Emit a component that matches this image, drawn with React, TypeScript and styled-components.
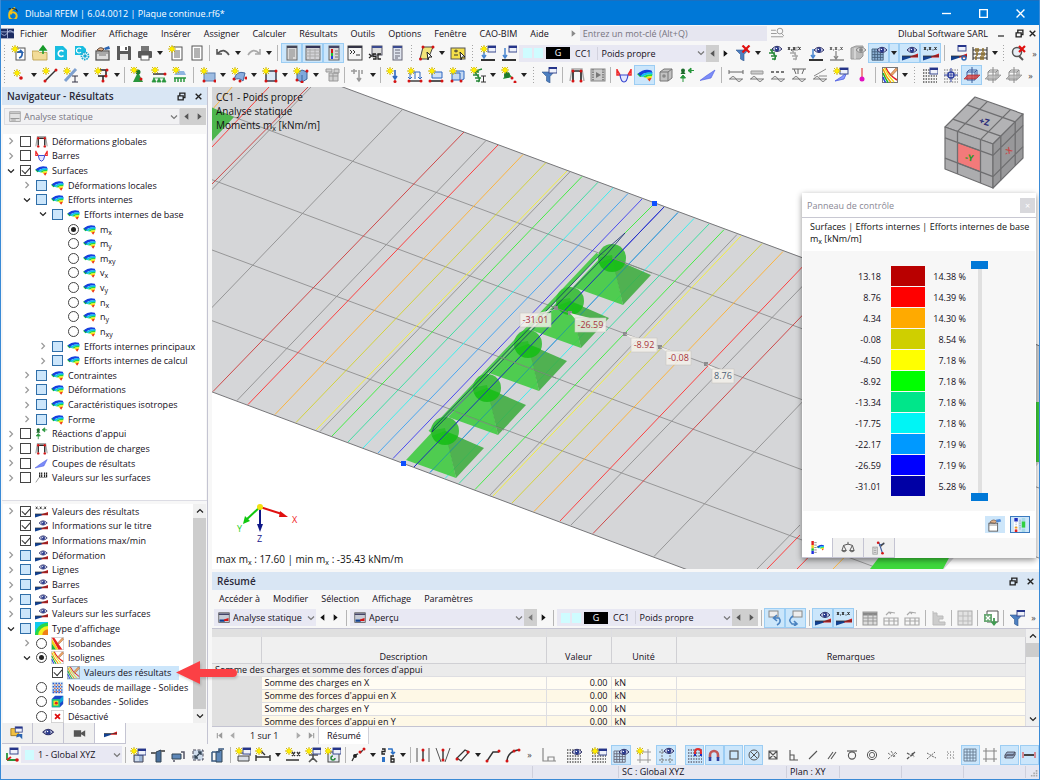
import React from "react";
import styled, { createGlobalStyle, css } from "styled-components";

const GlobalStyle = createGlobalStyle`
  * { box-sizing: border-box; }
  body { margin: 0; background: #fff; }
  body, button, input, select, table {
    font-family: "Open Sans", "Noto Sans", sans-serif;
    font-size: 9px;
    font-weight: 500;
    color: #140e20;
  }
  button { border: 0; padding: 0; background: none; }
  sub { font-size: 7px; line-height: 1; vertical-align: -2px; }
`;

/* ---------- icon drawings, all on a 16 x 16 grid ---------- */

const RED = "#d41414";
const GRAY = "#8a8a8a";
const BLUE = "#2b64b0";

const star = (x = 4, y = 4) => (
  <g>
    <path d={`M${x - 4} ${y}h8M${x} ${y - 4}v8M${x - 3} ${y - 3}l6 6M${x + 3} ${y - 3}l-6 6`} stroke="#c4aa00" strokeWidth=".9" />
    <circle cx={x} cy={y} r="2.2" fill="#fff000" stroke="#f0d800" strokeWidth=".8" />
  </g>
);
const dot = (x: number, y: number, c = RED, r = 1.5) => <circle cx={x} cy={y} r={r} fill={c} />;
const eye = (x = 11, y = 5) => (
  <g>
    <path d={`M${x - 5} ${y}q5 -5.500 10 0q-5 5 -10 0z`} fill="#d4d8ee" stroke="#2b2e66" strokeWidth="1" />
    <circle cx={x} cy={y} r="2.3" fill="#2a3a8c" />
    <circle cx={x - 0.6} cy={y - 0.6} r=".7" fill="#fff" />
  </g>
);
const page = (x = 3, y = 1, w = 10, h = 14) => (
  <rect x={x} y={y} width={w} height={h} fill="#fff" stroke="#555" strokeWidth="1" />
);
const cross = (x: number, y: number, r = 3) => (
  <path d={`M${x - r} ${y - r}l${2 * r} ${2 * r}M${x + r} ${y - r}l${-2 * r} ${2 * r}`} stroke="#e01010" strokeWidth="2.2" />
);
const wedge = (
  <g>
    <path d="M0 11H9V12.500L0 15.500z" fill="#12408f" />
    <path d="M8 11.500L16 8.500V12.500H8z" fill="#d21a1a" />
    <path d="M0 11L16 11" stroke="#333" strokeWidth=".8" />
  </g>
);
const xxx = (c = "#222") => (
  <path d="M1 2l2 3M3 2l-2 3M6 2l2 3M8 2l-2 3M11.500 2l2 3M13.500 2l-2 3M4.500 4.500v1M10 4.500v1" stroke={c} strokeWidth="1" fill="none" />
);
const windowBox = (x: number, y: number) => (
  <g>
    <rect x={x} y={y} width="8" height="6" fill="#eef1fa" stroke="#3b4a8f" />
    <path d={`M${x} ${y + 1}h8`} stroke="#26358a" strokeWidth="2" />
  </g>
);
const funnel = <path d="M1 5h12L9 9.500V16L5.500 14V9.500z" fill="#4d7fc0" stroke="#32598f" strokeWidth=".6" />;
const surface = (
  <g>
    <path d="M0 7L4 5L6 9L3 10z" fill="#10b83c" />
    <path d="M1 6.500Q7 1 14.500 3.500L15.500 6Q7 4.500 3.500 9z" fill="#1740e0" />
    <path d="M3.500 9Q8 4.500 15.300 5.500L15.500 7.500Q9 6.500 6 10z" fill="#10bff0" />
    <path d="M6 10Q9 6.800 15.500 7.200L15 9Q10.500 8.800 8.500 10.500z" fill="#22d840" />
    <path d="M8.500 10.500Q11 8.800 15.200 9L14.500 11Q12 10.500 10.500 12z" fill="#f4ea10" />
    <path d="M10.500 12Q12.500 10.500 14.600 11L12.500 14.500z" fill="#f03a10" />
  </g>
);
const coil = (c: string) => (
  <path d="M12 2Q3 4 7 8Q11 12 8 15M4 5h5M3 8h6M5 11h6M6 14h4" fill="none" stroke={c} strokeWidth="1.500" />
);
const grid = (x: number, y: number, n: number, s: number, c: string) => (
  <path
    d={Array.from({ length: n + 1 }, (_, i) => `M${x + i * s} ${y}v${n * s}M${x} ${y + i * s}h${n * s}`).join("")}
    stroke={c}
    strokeWidth=".9"
    fill="none"
  />
);
const dotGrid = (c = "#555") => (
  <path d="M1 3h14M1 6h14M1 9h14M1 12h14M1 15h14" stroke={c} strokeWidth="1.400" strokeDasharray="1.400 1.200" />
);
const supports = (c: string) => <path d="M2 11h12M3 11l-2 4h4zM8 11l-2 4h4zM13 11l-2 4h4z" fill={c} stroke={c} strokeWidth=".8" />;
const pencil = <path d="M14 1L9 6.500L8.500 8.500L10.500 8L15.500 2.800z" fill="#f0a868" stroke="#a05a30" strokeWidth=".6" />;
const isoPage = (w = 1.3, bg = "#fff", edge = "#d0d0d0") => (
  <g fill="none">
    <rect x=".5" y=".5" width="15" height="15" fill={bg} stroke={edge} />
    <path d="M1 2Q4 10 9 15.500" stroke="#f0a000" strokeWidth={w} />
    <path d="M4 1Q7 8 15 13" stroke="#e02020" strokeWidth={w} />
    <path d="M1 6Q3 11 6 15.500" stroke="#18b028" strokeWidth={w} />
    <path d="M1 10Q2 13 3.500 15.500" stroke="#2040e0" strokeWidth={w} />
    <path d="M2.500 1Q6 9 12 15" stroke="#f2e020" strokeWidth={w} />
    {pencil}
  </g>
);
const wave = (c: string) => <path d="M2 12Q5 7 8 12T14 12M1 12h14" fill="none" stroke={c} strokeWidth="1" />;
const plane = (c: string) => (
  <g fill="none">
    <path d="M5 3h8v8M3 5h8v8H3zM3 5l2-2M11 5l2-2M8 0v16" stroke={c} strokeWidth="1" />
    <path d="M0 12L4 8H16L12 12z" fill={c === GRAY ? "#b5b5b5" : "#d84040"} stroke={c === GRAY ? "#888" : "#b01818"} strokeWidth=".6" fillOpacity=".8" />
  </g>
);
const frame = (c: string) => <path d="M2 3H14M4 3V14M12 3V14M2 1v3M14 1v3" stroke={c} strokeWidth="2" fill="none" />;

const ICONS: Record<string, React.ReactNode> = {
  newModel: <>{page(5, 3, 9, 12)}<path d="M6 7h5l-2-2M11 7q1 5-3 6" stroke={BLUE} fill="none" strokeWidth="1.800" />{star()}</>,
  open: <><path d="M0 6h6l1.500 1.500H15V15H1z" fill="#f2dc98" stroke="#b89a45" strokeWidth=".8" /><path d="M11 9V4M8 5l3-4l3 4z" fill="#169a2a" stroke="#169a2a" strokeWidth="1.500" /></>,
  brand: <><path d="M2 1h8l4 4v10H2z" fill="#19bde0" /><path d="M10.500 6.500a3 3 0 1 0 0 4" fill="none" stroke="#fff" strokeWidth="1.600" /></>,
  brandGear: <><path d="M1 1h8l3 3v6H1z" fill="#19bde0" /><path d="M7 4a2.500 2.500 0 1 0 0 3" fill="none" stroke="#fff" strokeWidth="1.200" /><circle cx="11" cy="11" r="3.500" fill="#fff" stroke="#19a8d0" strokeWidth="1.800" strokeDasharray="1.600 .8" /><circle cx="11" cy="11" r="1.800" fill="#19a8d0" /></>,
  box: <><rect x="1" y="6" width="13" height="9" fill="#dcdcdc" stroke="#555" strokeWidth="1.300" /><path d="M2 8h11M4 10h7" stroke="#777" /><path d="M2 5Q5 1 9 4l-2 2z" fill="#e0b088" stroke="#5a4538" strokeWidth="1" /><path d="M9 3l5-2l1 3l-5 1z" fill={BLUE} /></>,
  save: <><path d="M1 1h13l1 1v13H1z" fill="#5a5a5a" /><rect x="4" y="1" width="8" height="5" fill="#fff" /><rect x="9" y="2" width="2" height="3" fill="#5a5a5a" /><rect x="4" y="9" width="8" height="6" fill="#e8e8e8" /></>,
  print: <><rect x="1" y="6" width="14" height="7" rx="1" fill="#5a5a5a" /><rect x="4" y="1" width="8" height="5" fill="#777" /><rect x="4" y="10" width="8" height="5" fill="#fff" stroke="#5a5a5a" /></>,
  docStar: <>{page(4, 2, 10, 13)}<path d="M6 6h6M6 8h6M6 10h6M6 12h6" stroke="#666" />{star()}</>,
  doc: <>{page()}<path d="M5 4h6M5 6h6M5 8h6M5 10h6M5 12h6" stroke="#666" /></>,
  undo: <path d="M2 4v5h5M2.500 8.500Q9 2 14 10" fill="none" stroke="#555" strokeWidth="1.600" />,
  redo: <path d="M14 4v5h-5M13.500 8.500Q7 2 2 10" fill="none" stroke="#aaa" strokeWidth="1.600" />,
  navPanel: <><rect x="3" y="1" width="10" height="14" fill="#d8d8d8" stroke="#666" /><path d="M3 2h10" stroke="#445" strokeWidth="2" /><path d="M5 5h6M5 7h6M5 9h6M5 11h6M5 13h4" stroke="#888" /></>,
  tablePanel: <><rect x="1" y="1" width="14" height="14" fill="#d4d4d8" stroke="#666" /><path d="M1 2h14" stroke="#335" strokeWidth="2" /><path d="M1 5h14M1 8h14M1 11h14M5 4v11M10 4v11" stroke="#aaa" /></>,
  ctrlPanel: <><rect x="3" y="1" width="10" height="14" fill="#d8d8d8" stroke="#666" /><path d="M3 2h10" stroke="#446" strokeWidth="2" /><path d="M6 4v4" stroke={RED} strokeWidth="2" /><path d="M6 8v3" stroke="#20c030" strokeWidth="2" /><path d="M6 11v3" stroke="#2040e0" strokeWidth="2" /><path d="M9 6h3M9 9h3M9 12h3" stroke="#777" /></>,
  console: <><rect x="1" y="1" width="14" height="14" fill="#f4f4f4" stroke="#444" /><path d="M1 2h14" stroke="#334" strokeWidth="2" /><path d="M3 5l2 2l-2 2M6 5l2 2l-2 2M9 10h4" fill="none" stroke="#333" /></>,
  script: <><rect x="4" y="1" width="10" height="9" fill="#ddd" stroke="#556" /><path d="M4 2h10" stroke="#3b4a8f" strokeWidth="2" /><path d="M1 9l2.500 2l-2.500 2M8 9H5v2.500h3V14H5M13 9h-3v5h3" fill="none" stroke="#222" strokeWidth="1.300" /></>,
  listDoc: <><rect x="4" y="1" width="9" height="14" fill="#dfe4ee" stroke="#667" /><path d="M4 2h9" stroke="#3b4a8f" strokeWidth="2" /><path d="M6 5h5M6 8h5M6 11h5M6 13h3" stroke="#667" /></>,
  lasso: <><path d="M4 2h10L9 14H1z" fill="#f3e67a" stroke="#444" />{dot(4, 2)}{dot(14, 2)}{dot(1.500, 14)}<path d="M8 7l5 5h-3l-1 3z" fill="#fff" stroke="#222" /></>,
  zone: <><rect x="1" y="3" width="14" height="11" fill="#f5e04a" stroke="#555" /><path d="M4 6h4M6 4.500v3M4 10h4" stroke="#333" /><path d="M10 7l5 5h-3l-1 3z" fill="#fff" stroke="#222" /></>,
  loadNew: <><path d="M1 15h14" stroke="#333" strokeWidth="2" /><path d="M4 5v8M2 10l2 3l2-3" stroke="#4a86d0" fill="none" strokeWidth="1.500" />{windowBox(8, 1)}{star(4, 4)}</>,
  load: <><path d="M1 15h14" stroke="#333" strokeWidth="2" /><path d="M4 3v10M2 10l2 3l2-3" stroke="#4a86d0" fill="none" strokeWidth="1.500" />{windowBox(8, 1)}</>,
  filterOff: <>{funnel}{cross(11, 4, 3.500)}</>,
  coilEye: <>{coil("#28883a")}{eye(11, 4)}</>,
  coilX: <>{coil("#aaa")}{xxx("#333")}</>,
  loadEye: <><path d="M1 15h14" stroke="#333" strokeWidth="2" /><path d="M5 4v9M3 10l2 3l2-3" stroke="#4a86d0" fill="none" strokeWidth="1.500" />{eye(11, 5)}</>,
  loadX: <><path d="M1 15h14M7 6v8M5 11l2 3l2-3" stroke="#888" fill="none" strokeWidth="1.300" />{xxx("#555")}</>,
  solidEye: <><path d="M1 3l5-2h7v10l-3 3H1z" fill="#bbb" stroke="#999" /><path d="M5 3v11" stroke="#eee" /><path d="M6 5q5-5.500 10 0q-5 5-10 0z" fill="#ddd" stroke="#888" /><circle cx="11" cy="5" r="2" fill="#888" /></>,
  meshEye: <><rect x="1" y="4" width="11" height="11" fill="#8fb4d8" />{grid(1, 4, 4, 2.800, "#44607c")}{eye(11, 5)}</>,
  resultEye: <>{wedge}{eye(10, 5)}</>,
  resultX: <>{wedge}{xxx()}</>,
  resultWin: <>{wedge}{windowBox(7, 0)}<circle cx="13" cy="13" r="2" fill="none" stroke={BLUE} strokeWidth="1.500" /></>,
  abacus: <><path d="M1 2v13M15 2v13M1 5h14M1 9h14M1 13h14" stroke="#333" strokeWidth="1.100" /><path d="M4 3v4M6 3v4M11 3v4M5 7v4M10 7v4M12 7v4M4 11v4M9 11v4M11 11v4" stroke="#8a6a20" strokeWidth="1.400" /></>,
  findOff: <><circle cx="7" cy="7" r="4.500" fill="#e8eef5" stroke="#555" strokeWidth="1.500" /><path d="M9 11l4 4" stroke="#555" strokeWidth="2" />{cross(12, 4, 3)}</>,
  node: <>{star(6, 6)}{dot(10, 11, RED, 1.800)}</>,
  line: <><path d="M3 14L14 3" stroke="#333" strokeWidth="1.500" />{dot(3, 14)}{dot(14, 3)}{star()}</>,
  member: <><path d="M2 14L13 2" stroke="#7da0d0" strokeWidth="3" /><path d="M9 9h6M12 9v6M9 15h6" stroke="#334" />{star()}</>,
  poly: <><path d="M4 9h8V3H6M9 9v5" fill="none" stroke="#222" strokeWidth="1.500" />{dot(9, 14)}{dot(13, 3)}{dot(12, 9)}{star()}</>,
  nodeSup: <><path d="M8 5L3 15h10z" fill="#28963c" />{dot(8, 5, "#1d7a2c", 2.500)}{dot(11, 12)}{star(4, 3)}</>,
  lineSup: <><path d="M2 7h12" stroke="#333" strokeWidth="1.500" />{dot(14, 7)}{supports("#28963c")}{star(4, 3)}</>,
  surfSup: <><path d="M2 8h12l-2-4H6z" fill="#8fb4e0" /><path d="M2 11h12M3 11v4M6 11v4M9 11v4M12 11v4" stroke="#28963c" strokeWidth="1.500" />{star(4, 3)}</>,
  surf: <><rect x="4" y="6" width="11" height="8" fill="#9dbce2" stroke="#5b7fae" />{dot(4, 14)}{dot(15, 14)}{star()}</>,
  surfCurved: <><path d="M3 13Q5 3 14 6L12 14Q8 10 3 13z" fill="#8aaee0" stroke="#44699f" />{dot(3, 12)}{dot(9, 14)}{dot(15, 11)}{star()}</>,
  opening: <><rect x="4" y="4" width="10" height="10" fill="#dbe8f7" stroke="#334" strokeWidth="1.400" />{dot(4, 14)}{dot(14, 14)}{dot(14, 4)}{star()}</>,
  solid: <><path d="M4 6l5-3l5 2v7l-5 3l-5-2z" fill="#7fa8dc" stroke="#3f669c" /><path d="M9 8v7" stroke="#3f669c" />{dot(4, 13)}{dot(9, 15)}{dot(14, 4)}{star()}</>,
  solidGray: <path d="M2 2h6v3H2zM5 6h9v8H5zM5 9h9M9 6v8M10 2h5v4h-5z" fill="#d0d0d0" stroke="#999" />,
  loadGray: <path d="M4 2v5M1 4h6M9 3v11M7 11l2 3l2-3M12 3v4" fill="none" stroke="#999" strokeWidth="1.500" />,
  nodalLoad: <><path d="M9 3v9M7 9l2 3l2-3" fill="none" stroke="#2c66c0" strokeWidth="1.600" />{dot(9, 14.500)}{star()}</>,
  lineLoad: <><path d="M3 12V5h10v7M8 5v7M1 10l2 2l2-2M11 10l2 2l2-2" fill="none" stroke="#2c66c0" /><path d="M2 14h12" stroke="#333" strokeWidth="1.400" />{dot(2, 14)}{dot(14, 14)}{star()}</>,
  memberLoad: <><path d="M4 5h10v6H4z" fill="#cfe0f6" stroke="#2c66c0" /><path d="M2 14h12" stroke="#555" strokeWidth="2" />{dot(2, 14)}{dot(14, 14)}{star()}</>,
  surfLoad: <><path d="M3 13V6h8v7zM7 4h8v8l-4 2" fill="#c3d8f2" stroke="#2c66c0" />{dot(3, 14)}{dot(12, 14)}{star()}</>,
  impLoad: <>{coil("#28883a")}<path d="M11 9h5M13.500 9v6M11 15h5" stroke="#333" />{star(4, 3)}</>,
  nodeImp: <><path d="M6 4l5 6l-9 2z" fill="#28963c" />{dot(6, 8, "#1d7a2c", 3)}{dot(11, 11)}{dot(14, 15)}{star(4, 3)}</>,
  filterWin: <>{funnel}{windowBox(8, 0)}</>,
  frameGlobal: <><path d="M1 14L3 2H13L15 14" fill="none" stroke="#a8a8a8" strokeWidth="1.400" /><path d="M4 13V5Q4 4 6 4H10Q12 4 12 5V13" fill="none" stroke="#2c2c2c" strokeWidth="1.700" />{dot(4, 14)}{dot(12, 14)}{dot(4, 4)}{dot(12, 4)}</>,
  film: <><rect x="1" y="2" width="14" height="12" fill="#ccc" stroke="#888" /><path d="M3 2v12M13 2v12" stroke="#888" strokeWidth="2" strokeDasharray="1.500 1" /><path d="M6 5l5 3l-5 3z" fill="#777" /></>,
  bars: <><path d="M1 2V8H4M4 8L1 3M15 2V8H12M12 8L15 3" stroke="#f02828" fill="none" strokeWidth="1.500" /><path d="M4 8h8Q11 15 8 15T4 8z" fill="#e4e8ff" stroke="#3a48d0" strokeWidth="1.200" /></>,
  surface,
  cubeGray: <><path d="M2 5l4-3h8v9l-4 3H2zM2 5h8v9M10 5l4-3" fill="#c2c2c2" stroke="#777" /><circle cx="6" cy="9" r="1.800" fill="#888" /></>,
  reactions: <><path d="M4 15V10M1.500 11L4 8l2.500 3zM15 3.500H9M12 1L9 3.500l3 2.500z" fill="#28963c" stroke="#28963c" />{dot(4, 3.500, "#1d6a2c", 2)}<path d="M1.500 7h5L4 3z" fill="#1d6a2c" /></>,
  section: <path d="M0 13.500L6 9L15 3L11 11z" fill="#7b8cf8" stroke="#4a5ae0" strokeWidth=".6" />,
  dimA: <><path d="M1 5h14M1 3v4M15 3v4" stroke="#666" />{wave("#777")}</>,
  dimB: <><path d="M2 4h12v3H2z" fill="#ccc" stroke="#999" />{wave("#777")}</>,
  dimC: <><path d="M1 5h14" stroke="#777" strokeWidth="2" strokeDasharray="3 2" />{wave("#777")}</>,
  dimD: <><path d="M1 2h14M3 2l2 5M13 2l-2 5M7 2v5" stroke="#666" />{wave("#777")}</>,
  dimE: <><path d="M2 9L14 2M7 9h8" stroke="#888" />{wave("#777")}</>,
  sectionNew: <><path d="M2 14Q9 10 14 5l-3 7z" fill="#8b9cff" stroke="#4a5ae0" strokeWidth=".8" />{windowBox(7, 1)}{star()}</>,
  pin: <><path d="M8 1v10" stroke="#e02020" />{dot(8, 12, "#e010c0", 2.500)}</>,
  iso: isoPage(1.500, "#fff", "#777"),
  isoThin: isoPage(),
  isoWide: <><rect x=".5" y=".5" width="15" height="15" fill="#fff" stroke="#d0d0d0" /><path d="M1 1h3L14 15.500H9z" fill="#e82020" /><path d="M1 2L9 15.500H6L1 8z" fill="#f2cf10" /><path d="M1 8l5 7.500H1z" fill="#18b840" />{pencil}</>,
  isoSel: isoPage(1.200, "#cfe4ee", "#9ab"),
  gridWin: <>{dotGrid()}{windowBox(8, 1)}</>,
  gridDots: <>{dotGrid("#999")}<circle cx="8" cy="8" r="3" fill="#fff" stroke="#3040a0" strokeWidth="1.500" /><path d="M8 1v14M1 8h14" stroke="#3040a0" /></>,
  planeA: plane("#3a5a9a"),
  planeB: plane(GRAY),
  valTag: <><path d="M5 3h4M11 3h4M5 6h4M11 6h4" stroke="#222" strokeWidth="2.500" strokeDasharray="1.500 1" /><path d="M1 14L5 8h10" fill="none" stroke="#888" /></>,
  colorMap: <><rect width="16" height="16" fill="#10c8f0" /><path d="M0 16A16 15 0 0 1 16 1V16z" fill="#28d848" /><path d="M4 16A12 11 0 0 1 16 5V16z" fill="#f2ee20" /><path d="M9 16A7 7 0 0 1 16 9V16z" fill="#f08018" /></>,
  meshPts: <><rect x="1" y="1" width="14" height="14" fill="#cfe4ee" /><path d="M2 3h12M2 7h12M2 11h12M2 14h12" stroke="#2a58d0" strokeWidth="2" strokeDasharray="2 1.500" /><path d="M4 5h9M4 9h9M4 13h9" stroke="#d05030" strokeWidth="1.500" strokeDasharray="1.500 2" /></>,
  cubeColor: <><path d="M1 5l4-4h10v10l-4 4H1z" fill="#1e48c8" /><path d="M1 5h10v10H1z" fill="#18c088" /><path d="M3 7h6v6H3z" fill="#f0e020" /><circle cx="6.500" cy="10" r="1.800" fill="#e02020" /><path d="M11 5l4-4v6l-4 3z" fill="#10a8d8" /></>,
  off: <><rect x=".5" y=".5" width="15" height="15" fill="#fff" stroke="#ccc" />{cross(8, 8, 3)}</>,
  static: <><rect x="1" y="1" width="14" height="13" fill="#c6cbd6" stroke="#555" /><path d="M1 3h14" stroke="#446" strokeWidth="2" /><path d="M2 10h7v3H2z" fill="#12408f" /><path d="M8 10l6-2v4H8z" fill={RED} /></>,
  staticGray: <><rect x="1" y="1" width="14" height="13" fill="#e2e2e2" stroke="#999" /><path d="M1 3h14M2 10h12M3 12h6" stroke="#999" strokeWidth="1.500" /></>,
  dataTab: <><path d="M1 3h9v8H1z" fill="#f2c040" stroke="#a07818" />{windowBox(6, 1)}<path d="M8 9h6v6l-3-3l-4 1z" fill={BLUE} /></>,
  eye: <g transform="translate(-5 1) scale(1.200)">{eye(11, 5)}</g>,
  camera: <path d="M1 4h9v8H1zM10 7l5-3v8l-5-3z" fill="#555" />,
  wedge: <g transform="translate(0 -3)">{wedge}</g>,
  hand: <><rect x="1" y="6" width="10" height="9" fill="#fff" stroke="#555" /><path d="M1 8h10" stroke="#888" /><path d="M2 5Q6 0 10 4l-2 2z" fill="#e0b088" stroke="#6a5040" strokeWidth=".8" /><path d="M9 2l5-1l1 3l-5 1z" fill="#4a88d8" /></>,
  scales2: <><rect x="1" y="0" width="5" height="16" fill="#fff" /><path d="M3.500 0v4" stroke="#2030c0" strokeWidth="4" /><path d="M3.500 13v3" stroke="#e02020" strokeWidth="3" /><path d="M3.500 10v2" stroke="#f0a020" strokeWidth="3" /><path d="M3.500 5v5" stroke="#999" strokeDasharray="1 1" /><path d="M12 0v4" stroke="#a8d8e8" strokeWidth="4" /><path d="M12 4v7" stroke="#30d040" strokeWidth="4" /><path d="M12 12v4" stroke="#a8d8e8" strokeWidth="4" /><path d="M8 2v12" stroke="#777" strokeDasharray="1 1" /></>,
  legend: <><path d="M2 0v5" stroke="#e02020" strokeWidth="3" /><path d="M2 5v4" stroke="#f0d020" strokeWidth="3" /><path d="M2 9v3" stroke="#20c030" strokeWidth="3" /><path d="M2 12v4" stroke="#2030e0" strokeWidth="3" /><path d="M4 2h3M4 5h3M4 8h3M4 11h3M4 14h3" stroke="#777" /><g transform="translate(7 3) scale(.6)">{surface}</g></>,
  balance: <path d="M8 1v3M3 5Q8 2 13 5M3 5L1 11h5zM13 5l-3 6h5zM1 11q2.500 3 5 0M10 11q2.500 3 5 0" fill="none" stroke="#555" strokeWidth="1.100" />,
  factors: <><rect x="1" y="7" width="5" height="8" fill="#eee" stroke="#999" /><path d="M2 9h3M2 11h3M2 13h3" stroke="#999" /><path d="M8 2l4 12M8 5l6-2" stroke="#4060a0" strokeWidth="1.300" />{dot(7, 2)}{dot(12, 14)}<path d="M10 6l4-4" stroke="#444" strokeWidth="1.500" /></>,
  jumpOut: <><rect x="2" y="1" width="9" height="6" fill="#eee" stroke="#888" /><path d="M7 8h5q3 4-2 7M10 5L6.500 8l3.500 3" fill="none" stroke="#4a82c0" strokeWidth="1.600" /></>,
  jumpIn: <><rect x="5" y="1" width="9" height="6" fill="#eee" stroke="#888" /><path d="M5 6Q-1 10 4 14h4M6 11l3 3l-3 2" fill="none" stroke="#4a82c0" strokeWidth="1.600" /></>,
  tableGray: <><rect x="1" y="2" width="14" height="13" fill="#ddd" stroke="#999" /><path d="M1 4h14" stroke="#888" strokeWidth="3" /><path d="M1 8h14M1 11h14M6 4v11M11 4v11" stroke="#999" /></>,
  tableUp: <path d="M1 8h14v7H1zM1 11h14M6 8v7M11 8v7M3 5l3-3l2 2M6 2l6 1" fill="none" stroke="#aaa" strokeWidth="1.200" />,
  chart: <path d="M2 1v14h12v-3H8v-3h4V6H6V3H2" fill="#ccc" stroke="#bbb" />,
  sheet: <><rect x="1" y="1" width="14" height="14" fill="#e2e2e2" stroke="#aaa" /><path d="M1 6h14M1 11h14M6 1v14M11 1v14" stroke="#bbb" /></>,
  excel: <><path d="M4 1h11v11H4z" fill="#fff" stroke="#555" /><rect x="1" y="4" width="8" height="8" fill="#6aa874" /><path d="M3 6l4 4M7 6l-4 4" stroke="#fff" strokeWidth="1.300" /><path d="M11 8v6M8.500 11.500l2.500 3l2.500-3" stroke="#3f9a50" fill="none" strokeWidth="1.800" /></>,
  axes: <><path d="M3 13h9M3 13V6" stroke="#28963c" strokeWidth="1.800" /><path d="M3 13l4-3" stroke="#e02020" strokeWidth="1.800" />{dot(13, 13, RED, 1.800)}{windowBox(6, 1)}</>,
  viewStar: <><path d="M4 8h9v7H4z" fill="#9db6d8" stroke="#445" />{windowBox(8, 2)}{star()}<path d="M6 9v5M8 9v5" stroke="#fff" /></>,
  viewX: <><path d="M6 5l5-2v12H6z" fill="#4a709c" stroke="#345" /><path d="M1 6h5M11 4h4" stroke="#666" strokeWidth="2" /></>,
  viewY: <><path d="M2 7h9v5H2z" fill="#5d87b8" stroke="#345" /><path d="M11 5h3v7M4 13v2" stroke="#556" strokeWidth="1.500" fill="none" /></>,
  viewZ: <><path d="M3 3h10v10H3z" fill="#cfdcec" stroke="#445" strokeDasharray="3 1.500" /><path d="M5 11l6-6M8 5h3v3M5 8v3h3" stroke="#345" fill="none" strokeWidth="1.400" /></>,
  viewRot: <><path d="M6 5l6-2v12H6z" fill="#5d87b8" stroke="#345" /><path d="M2 5h7V2h5M2 5v9h4" fill="none" stroke="#3a5a80" strokeWidth="1.500" /></>,
  objStar: <><path d="M3 9h11v5H3zM5 6h10v3" fill="#d8dde6" stroke="#444" />{windowBox(8, 1)}{star()}</>,
  dimStar: <><path d="M1 10h14M1 8v6M15 8v6M6 4l4 4" stroke="#333" strokeWidth="1.400" />{star()}</>,
  dimStarX: <><path d="M1 13h13M7 5l3 4M10 5l-3 4M12 5l3 4M15 5l-3 4" stroke="#333" strokeWidth="1.300" />{star()}</>,
  person: <><path d="M8 7v4l-4 4M8 11l4 4M4 8h9" stroke="#555" strokeWidth="1.700" fill="none" />{windowBox(8, 1)}{star()}</>,
  clockStar: <><rect x="3" y="5" width="11" height="10" fill="#e4e8ef" stroke="#444" /><path d="M8 9a2 2 0 1 0 2 2" stroke="#28883a" fill="none" strokeWidth="1.500" />{windowBox(8, 1)}{star(3, 4)}</>,
  chain: <><path d="M2 14L5 8L10 6L14 2" fill="none" stroke="#333" strokeWidth="1.300" strokeDasharray="4 2" />{dot(5, 9, "#222", 2)}{dot(10, 5)}{dot(14, 2)}</>,
  renum: <><path d="M2 2h3v2.500H2V7h3M14 9h-3v6h3v-3h-3" fill="none" stroke="#222" strokeWidth="1.300" /><path d="M8 2h4l1 4M11 5l2 2l2-2" fill="none" stroke="#2c72c8" strokeWidth="1.500" /><path d="M2 10h3v5H2z" fill="#2c72c8" /></>,
  lines3: <><path d="M2 1v14M14 1v14" stroke="#555" /><path d="M8 3v10" stroke="#333" strokeWidth="1.400" />{dot(8, 3)}{dot(8, 13)}</>,
  linesV: <><path d="M1 1l5 14M15 1l-5 14" stroke="#555" /><path d="M8 3v10" stroke="#333" strokeWidth="1.400" />{dot(8, 3)}{dot(8, 13)}</>,
  strip: <><path d="M2 11l8-8l4 2l-8 9z" fill="none" stroke="#333" strokeWidth="1.200" />{dot(2, 12)}{dot(13, 5)}</>,
  lineDiag: <><path d="M2 14L8 5H14" stroke="#333" strokeWidth="1.400" fill="none" />{dot(2, 14)}{dot(14, 4)}</>,
  arcLine: <><path d="M2 15Q2 5 13 3" stroke="#333" strokeWidth="1.400" fill="none" />{dot(2, 14)}{dot(9, 4)}{dot(14, 3)}</>,
  corner: <path d="M2 1v13h13M7 14v-4h6v4" stroke="#888" fill="none" strokeWidth="1.200" />,
  gridEye: <>{dotGrid()}{eye(11, 5)}</>,
  gridStar: <>{dotGrid()}{windowBox(8, 2)}{star()}</>,
  gridEyeBlue: <>{grid(1, 4, 4, 2.800, "#667")}{eye(11, 5)}</>,
  guideStar: <><path d="M4 2v14M12 2v14M1 5h14M1 13h14" stroke="#999" />{star()}</>,
  guideEye: <><path d="M4 2v14M12 2v14M1 5h14M1 13h14" stroke="#777" strokeDasharray="2 1" />{eye(11, 4)}</>,
  snap: <>{dotGrid("#667")}<path d="M8 8V5a3 3 0 0 1 6 0v3" fill="none" stroke="#e03030" strokeWidth="2" /><path d="M8 7v2M14 7v2" stroke="#2030c0" strokeWidth="2" /></>,
  magnet: <><path d="M4 11V8a4 4 0 0 1 8 0v3" fill="none" stroke="#c05858" strokeWidth="2.600" /><path d="M4 10v4M12 10v4" stroke="#3040a0" strokeWidth="2.600" /></>,
  sqr: <rect x="4" y="4" width="8" height="8" fill="none" stroke="#555" strokeWidth="1.200" />,
  circX: <><circle cx="8" cy="8" r="5" fill="none" stroke="#555" /><path d="M5 5l6 6M11 5l-6 6" stroke="#555" /></>,
  sqrX: <path d="M4 4h8v8H4zM4 4l8 8M12 4l-8 8" fill="none" stroke="#555" strokeWidth="1.100" />,
  perp: <path d="M5 3v10h8M5 8h4v5" fill="none" stroke="#555" strokeWidth="1.100" />,
  ray: <path d="M4 12l3-3M9 7l3-3M7 9l2-2" stroke="#555" strokeWidth="1.100" />,
  para: <path d="M4 12l5-7M7 12l5-7" stroke="#555" strokeWidth="1.100" />,
  tang: <><path d="M3 4h10" stroke="#555" strokeWidth="1.200" /><circle cx="8" cy="8.500" r="3.600" fill="none" stroke="#555" strokeWidth="1.100" /></>,
  hex: <><circle cx="8" cy="8" r="4.600" fill="none" stroke="#555" /><circle cx="8" cy="8" r="2.600" fill="none" stroke="#666" /></>,
  xA: <path d="M4 12l8-7M4 6l4 3M7 4l4 6M9 10l4-4" stroke="#777" strokeDasharray="3 1" />,
  xB: <path d="M4 12l8-7M4 6l5 3M9 6l2 4" stroke="#555" strokeWidth="1.200" strokeDasharray="3 1" />,
  xC: <path d="M4 12l8-7M4 6l5 3M9 9l4 2" stroke="#666" strokeDasharray="2 1" />,
  pts: <path d="M4 5h9M4 8h9M4 11h9M5 6l7 6" stroke="#777" strokeDasharray="1 2" />,
  gridB: grid(2, 2, 4, 3, "#667a90"),
  guides: <path d="M4 1v14M12 1v14M1 4h14M1 12h14" stroke="#888" strokeWidth="1.100" />,
  stack: <><path d="M3 11l2-3h8l-2 3z M3 8l2-3h8l-2 3z" fill="#9ab0cc" stroke="#445" strokeWidth=".8" /><path d="M13 5v3M3 8v3" stroke="#445" /></>,
  beam: <><path d="M2 5v6M14 5v6" stroke="#e04040" strokeWidth="1.100" /><path d="M3 8h10" stroke="#444" strokeWidth="2" /></>,
};

const Svg = styled.svg<{ $s: number }>`
  display: block;
  flex: none;
  width: ${(p) => p.$s}px;
  height: ${(p) => p.$s}px;
`;
const Icon = ({ name, size = 16 }: { name: string; size?: number }) => (
  <Svg $s={size} viewBox="0 0 16 16" aria-hidden="true">
    {ICONS[name]}
  </Svg>
);

const Glyph = ({ d, w = 8, fill = "none", stroke = "#444" }: { d: string; w?: number; fill?: string; stroke?: string }) => (
  <Svg $s={w} viewBox="0 0 8 8" aria-hidden="true">
    <path d={d} fill={fill} stroke={stroke} strokeWidth="1.200" />
  </Svg>
);
const ChevronDown = () => <Glyph d="M1 2.500L4 5.500L7 2.500" stroke="#777" />;
const TriLeft = ({ c = "#111" }) => <Glyph d="M5.500 1.500L2.500 4L5.500 6.500z" fill={c} stroke={c} w={7} />;
const TriRight = ({ c = "#111" }) => <Glyph d="M2.500 1.500L5.500 4L2.500 6.500z" fill={c} stroke={c} w={7} />;

/* ---------- shell ---------- */

const Shell = styled.div`
  display: flex;
  flex-direction: column;
  height: 100vh;
  overflow: hidden;
  background: #f7f7f7;
  border: solid #3a8ad6;
  border-width: 0 1px 1px 1px;
  position: relative;
`;
const TitleBar = styled.header`
  display: flex;
  align-items: center;
  height: 25px;
  flex: none;
  padding-left: 6px;
  background: #0078d7;
  border-top: 1px solid #1a6fc0;
  color: #fff;
`;
const TitleText = styled.span`
  padding-left: 6px;
`;
const Spacer = styled.div`
  flex: 1;
`;
const WindowButton = styled.button<{ $w?: number }>`
  width: ${(p) => p.$w ?? 37}px;
  display: flex;
  align-items: center;
  justify-content: center;
`;
const MenuBar = styled.nav`
  display: flex;
  align-items: center;
  height: 17px;
  flex: none;
`;
const MenuItems = styled.div<{ $pad: number }>`
  display: flex;
  gap: 13px;
  padding-left: ${(p) => p.$pad}px;
`;
const MenuItem = styled.button`
  white-space: nowrap;
`;
const SearchGroup = styled.div`
  display: flex;
  align-items: center;
  margin-left: 18px;
`;
const Search = styled.input`
  width: 187px;
  height: 15px;
  border: 0;
  padding: 0 3px;
  background: #e6e6f0;
  &::placeholder { color: #77747f; opacity: 1; }
`;

const Bar = styled.div<{ $h: number; $pad?: number; $pb?: number }>`
  display: flex;
  align-items: center;
  height: ${(p) => p.$h}px;
  padding-left: ${(p) => p.$pad ?? 0}px;
  padding-bottom: ${(p) => p.$pb ?? 0}px;
  flex: none;
  overflow: hidden;
`;
const ToolButton = styled.button<{ $on?: boolean; $w?: number }>`
  width: ${(p) => p.$w ?? 21}px;
  height: 20px;
  flex: none;
  display: flex;
  align-items: center;
  justify-content: center;
  ${(p) =>
    p.$on &&
    css`
      background: #cbe6fb;
      border: 1px solid #9ccdf3;
    `}
`;
const CaretButton = styled(ToolButton)`
  &::after {
    content: "";
    border: 3px solid transparent;
    border-top: 4px solid #222;
    border-bottom: 0;
  }
`;
const Sep = styled.span<{ $w?: number }>`
  width: ${(p) => p.$w ?? 5}px;
  flex: none;
  height: 16px;
  background: linear-gradient(#b5b5b5, #b5b5b5) center / 1px 100% no-repeat;
`;
const Handle = styled.span<{ $w?: number }>`
  width: ${(p) => p.$w ?? 9}px;
  flex: none;
  height: 16px;
  background: repeating-linear-gradient(#a5a5a5 0 1px, transparent 1px 3px) center / 1px 100% no-repeat;
`;
const More = styled.button`
  width: 13px;
  flex: none;
  text-align: center;
  color: #444;
`;
const SnapGroup = styled.div`
  flex: 1;
  min-width: 0;
  margin-left: 9px;
  display: flex;
  justify-content: space-between;
`;

/* Toolbar layout strings: "|n" separator, ":n" grip, "v" drop-down arrow, "*name" pressed, ">>" overflow */
const Tools = ({ items, w }: { items: string; w?: number }) => (
  <>
    {items
      .trim()
      .split(/\s+/)
      .map((t, i) => {
        if (t[0] === "|") return <Sep key={i} $w={Number(t.slice(1)) || 5} />;
        if (t[0] === ":") return <Handle key={i} $w={Number(t.slice(1)) || 9} />;
        if (t === "v" || t === "*v") return <CaretButton key={i} $w={10} $on={t === "*v"} aria-label="Plus d'options" />;
        if (t === ">>") return <More key={i}>»</More>;
        const on = t[0] === "*";
        const name = on ? t.slice(1) : t;
        return (
          <ToolButton key={i} $on={on} $w={w} aria-label={name} aria-pressed={on}>
            <Icon name={name} />
          </ToolButton>
        );
      })}
  </>
);

/* ---------- combo boxes ---------- */

const ComboBox = styled.label<{ $w: number; $light?: boolean }>`
  width: ${(p) => p.$w}px;
  flex: none;
  height: 17px;
  display: flex;
  align-items: center;
  gap: 3px;
  padding: 0 1px 0 4px;
  background: ${(p) => (p.$light ? "#f1f1f3" : "#e8e8f3")};
  border: ${(p) => (p.$light ? "1px solid #dcdce0" : "0")};
`;
const Select = styled.select<{ $muted?: boolean }>`
  appearance: none;
  flex: 1;
  min-width: 0;
  border: 0;
  padding: 0;
  background: transparent;
  color: ${(p) => (p.$muted ? "#77747f" : "#140e20")};
  outline: 0;
`;
const Swatches = styled.span`
  display: flex;
  gap: 2px;
  &::before, &::after {
    content: "";
    width: 9px;
    height: 10px;
    background: #cffcff;
  }
`;
const OneSwatch = styled.span`
  width: 9px;
  height: 10px;
  margin-right: 1px;
  background: #cffcff;
`;
const LoadTag = styled.span`
  background: #000;
  color: #fff;
  width: 24px;
  height: 12px;
  line-height: 12px;
  text-align: center;
`;
const CaseName = styled.span`
  padding: 0 6px 0 2px;
  border-right: 1px solid #d2d2de;
`;
const Step = styled.button<{ $on?: boolean; $w?: number }>`
  width: ${(p) => p.$w ?? 13}px;
  height: 17px;
  flex: none;
  display: flex;
  align-items: center;
  justify-content: center;
  background: ${(p) => (p.$on ? "#cfcfcf" : "transparent")};
`;
const LoadCombo = ({ w }: { w: number }) => (
  <ComboBox $w={w}>
    <Swatches />
    <LoadTag>G</LoadTag>
    <CaseName>CC1</CaseName>
    <Select aria-label="Cas de charge">
      <option>Poids propre</option>
    </Select>
    <ChevronDown />
  </ComboBox>
);

/* ---------- docked panels ---------- */

const Main = styled.main`
  flex: 1;
  min-height: 0;
  display: flex;
`;
const Dock = styled.aside`
  width: 207px;
  flex: none;
  display: flex;
  flex-direction: column;
  border-right: 1px solid #c4c4d2;
  padding-left: 1px;
`;
const DockGap = styled.div`
  height: 4px;
  flex: none;
  border-top: 1px solid #dcdce4;
`;
const DockTitle = styled.h2`
  display: flex;
  align-items: center;
  height: 18px;
  flex: none;
  margin: 0;
  padding: 0 1px 0 5px;
  background: #d9e6f4;
  font-size: 10px;
  font-weight: 600;
  color: #2b2938;
`;
const FloatGlyph = () => <Glyph w={9} d="M1 3.500h4.500v3.500h-4.500zM2.500 3V1h4.500v4H6" stroke="#222" />;
const CloseGlyph = () => <Glyph w={9} d="M1.500 1.500l5 5M6.500 1.500l-5 5" stroke="#222" />;

const TreePanel = styled.section<{ $grow?: boolean }>`
  background: #fff;
  display: flex;
  min-height: 0;
  flex: ${(p) => (p.$grow ? "1" : "none")};
  margin: 0 1px;
`;
const Tree = styled.ul<{ $rows: number; $h: number; $pb?: number }>`
  list-style: none;
  margin: 0;
  padding: 0 0 ${(p) => p.$pb ?? 0}px;
  flex: 1;
  min-width: 0;
  display: grid;
  grid-template-rows: repeat(${(p) => p.$rows}, 1fr);
  height: ${(p) => p.$h}px;
`;
const TreeRow = styled.li<{ $depth: number }>`
  display: flex;
  align-items: center;
  min-height: 0;
  padding-left: ${(p) => p.$depth * 16 + 2}px;
  white-space: nowrap;
`;
const Expander = styled.button`
  width: 12px;
  height: 12px;
  margin-right: 3px;
  flex: none;
  display: flex;
  align-items: center;
  justify-content: center;
`;
const NoExpander = styled.span`
  width: 12px;
  margin-right: 3px;
  flex: none;
`;
const Check = styled.input<{ $tint?: boolean }>`
  appearance: none;
  width: 11px;
  height: 11px;
  margin: 0 4px 0 0;
  flex: none;
  border: 1px solid ${(p) => (p.$tint ? "#2f6ea8" : "#444")};
  background: ${(p) => (p.$tint ? "#cce6fb" : "#fff")};
  display: grid;
  place-items: center;
  &:checked::after {
    content: "";
    width: 7px;
    height: 4px;
    border: solid #333;
    border-width: 0 0 1px 1px;
    transform: rotate(-48deg);
    margin-bottom: 2px;
  }
  &[type="radio"] { border-radius: 50%; }
  &[type="radio"]:checked::after {
    width: 5px;
    height: 5px;
    margin: 0;
    border: 0;
    border-radius: 50%;
    background: #222;
    transform: none;
  }
`;
const RowLabel = styled.label`
  display: flex;
  align-items: center;
`;
const RowText = styled.span<{ $sel?: boolean }>`
  display: flex;
  align-items: center;
  gap: 4px;
  height: 14px;
  padding-right: 8px;
  background: ${(p) => (p.$sel ? "#cce6fb" : "transparent")};
`;

type Row = {
  d: number;
  t: React.ReactNode;
  i: string;
  x?: "open" | "shut";
  k?: "check" | "tint" | "radio";
  on?: boolean;
  sel?: boolean;
};

const sub = (a: string, b: string) => (
  <span>
    {a}
    <sub>{b}</sub>
  </span>
);

const RESULTS: Row[] = [
  { d: 0, x: "shut", t: "Déformations globales", i: "frameGlobal" },
  { d: 0, x: "shut", t: "Barres", i: "bars" },
  { d: 0, x: "open", t: "Surfaces", i: "surface", on: true },
  { d: 1, x: "shut", k: "tint", t: "Déformations locales", i: "surface" },
  { d: 1, x: "open", k: "tint", t: "Efforts internes", i: "surface" },
  { d: 2, x: "open", k: "tint", t: "Efforts internes de base", i: "surface" },
  ...[["m", "x"], ["m", "y"], ["m", "xy"], ["v", "x"], ["v", "y"], ["n", "x"], ["n", "y"], ["n", "xy"]].map(
    ([a, b], n): Row => ({ d: 3, k: "radio", t: sub(a, b), i: "surface", on: n === 0 })
  ),
  { d: 2, x: "shut", k: "tint", t: "Efforts internes principaux", i: "surface" },
  { d: 2, x: "shut", k: "tint", t: "Efforts internes de calcul", i: "surface" },
  { d: 1, x: "shut", k: "tint", t: "Contraintes", i: "surface" },
  { d: 1, x: "shut", k: "tint", t: "Déformations", i: "surface" },
  { d: 1, x: "shut", k: "tint", t: "Caractéristiques isotropes", i: "surface" },
  { d: 1, x: "shut", k: "tint", t: "Forme", i: "surface" },
  { d: 0, x: "shut", t: "Réactions d'appui", i: "reactions" },
  { d: 0, x: "shut", t: "Distribution de charges", i: "frameGlobal" },
  { d: 0, x: "shut", t: "Coupes de résultats", i: "section" },
  { d: 0, x: "shut", t: "Valeurs sur les surfaces", i: "valTag" },
];
const DISPLAY: Row[] = [
  { d: 0, x: "shut", t: "Valeurs des résultats", i: "resultX", on: true },
  { d: 0, t: "Informations sur le titre", i: "resultEye", on: true },
  { d: 0, t: "Informations max/min", i: "resultEye", on: true },
  { d: 0, x: "shut", k: "tint", t: "Déformation", i: "resultEye" },
  { d: 0, x: "shut", k: "tint", t: "Lignes", i: "resultEye" },
  { d: 0, x: "shut", k: "tint", t: "Barres", i: "resultEye" },
  { d: 0, x: "shut", k: "tint", t: "Surfaces", i: "resultEye" },
  { d: 0, x: "shut", k: "tint", t: "Valeurs sur les surfaces", i: "resultEye" },
  { d: 0, x: "open", k: "tint", t: "Type d'affichage", i: "colorMap" },
  { d: 1, x: "shut", k: "radio", t: "Isobandes", i: "isoWide" },
  { d: 1, x: "open", k: "radio", t: "Isolignes", i: "isoThin", on: true },
  { d: 2, t: "Valeurs des résultats", i: "isoSel", on: true, sel: true },
  { d: 1, k: "radio", t: "Noeuds de maillage - Solides", i: "meshPts" },
  { d: 1, k: "radio", t: "Isobandes - Solides", i: "cubeColor" },
  { d: 1, k: "radio", t: "Désactivé", i: "off" },
];

const TreeView = ({ rows, h, group, pb }: { rows: Row[]; h: number; group: string; pb?: number }) => (
  <Tree $rows={rows.length} $h={h} $pb={pb}>
    {rows.map((r, i) => (
      <TreeRow key={i} $depth={r.d}>
        {r.x ? (
          <Expander aria-label={r.x === "open" ? "Réduire" : "Développer"}>
            {r.x === "open" ? (
              <Glyph d="M1 2.500L4 5.500L7 2.500" stroke="#222" />
            ) : (
              <Glyph d="M2.500 1L5.500 4L2.500 7" stroke="#999" />
            )}
          </Expander>
        ) : (
          <NoExpander />
        )}
        <RowLabel>
          <Check
            type={r.k === "radio" ? "radio" : "checkbox"}
            name={r.k === "radio" ? group : undefined}
            $tint={r.k === "tint"}
            defaultChecked={!!r.on}
          />
          <RowText $sel={r.sel}>
            <Icon name={r.i} size={13} />
            {r.t}
          </RowText>
        </RowLabel>
      </TreeRow>
    ))}
  </Tree>
);

const ScrollBar = styled.div`
  width: 13px;
  flex: none;
  display: flex;
  flex-direction: column;
  align-items: center;
  justify-content: space-between;
  background: #f0f0f0;
`;
const Thumb = styled.div<{ $h?: number }>`
  width: 100%;
  background: #cdcdcd;
  ${(p) => (p.$h ? `height: ${p.$h}px; flex: none;` : "flex: 1;")}
`;
const ScrollButton = styled.button`
  height: 14px;
  display: flex;
  align-items: center;
`;
const UpGlyph = () => <Glyph d="M1 5.500L4 2.500L7 5.500" stroke="#222" />;
const DownGlyph = () => <Glyph d="M1 2.500L4 5.500L7 2.500" stroke="#222" />;

const DockTabs = styled.div`
  display: flex;
  height: 21px;
  flex: none;
`;
const DockTab = styled.button<{ $on?: boolean }>`
  width: 31px;
  display: flex;
  align-items: center;
  justify-content: center;
  border: solid #c4c4d2;
  border-width: 0 1px 1px 0;
  background: ${(p) => (p.$on ? "#fff" : "#f0f0f0")};
`;

/* ---------- model view ---------- */

const Work = styled.div`
  flex: 1;
  min-width: 0;
  margin-left: 4px;
  display: flex;
  flex-direction: column;
`;
const Viewport = styled.section`
  flex: 1;
  min-height: 0;
  position: relative;
  background: #fff;
  overflow: hidden;
`;
const Scene = styled.svg`
  display: block;
  width: 100%;
  height: 100%;
`;
const ViewText = styled.p`
  position: absolute;
  left: 4px;
  top: 3px;
  margin: 0;
  font-size: 10px;
  line-height: 14px;
  color: #111;
`;
const ViewFooter = styled(ViewText)`
  top: auto;
  bottom: 3px;
`;

type Seg = [number, number, number, number, string];
const C = {
  g: "#8e8e90",
  dr: "#cc3a3a",
  r: "#ff3030",
  o: "#ffb02e",
  ol: "#d2d02c",
  y: "#f6f02c",
  gr: "#35ee35",
  t: "#30dc9c",
  c: "#2cf0ee",
  s: "#3aa0f2",
  b: "#3a3af0",
};
const SEGMENTS: Seg[] = [
  [211, 108.500, 1039, 417, C.g],
  [211, 179.300, 1039, 488, C.g],
  [211, 249.600, 1039, 558, C.g],
  [211, 320.300, 880, 569, C.g],
  [403, 109, 211, 308.500, C.g],
  [311, 87, 211, 190.500, C.g],
  [309, 86, 211, 185, C.dr],
  [270, 86, 211, 148, C.r],
  [233, 86, 211, 111, C.o],
  [464, 132, 213, 391.500, C.dr],
  [486, 140.500, 237, 400.500, C.g],
  [498, 145, 248, 404.500, C.r],
  [523, 154.500, 275, 414.500, C.o],
  [546, 162.500, 296, 422.500, C.ol],
  [567, 171, 316, 430, C.y],
  [570, 171.800, 320, 431.500, C.g],
  [582, 176.500, 332, 436, C.gr],
  [598, 182.300, 348, 442, C.t],
  [613, 187.800, 363, 448, C.c],
  [628, 193.600, 378, 453, C.s],
  [642, 199, 393, 458.500, C.b],
  [664, 207, 414, 467, C.b],
  [678, 212.500, 430, 472.500, C.s],
  [694, 218.500, 445, 478.500, C.c],
  [709, 224, 459, 483.500, C.t],
  [724, 229.700, 475, 489.500, C.gr],
  [737, 234.500, 490, 495, C.g],
  [741, 236, 493, 496, C.y],
  [762, 243.600, 512, 503, C.ol],
  [783, 251.500, 534, 511.500, C.o],
  [808, 261, 560, 521, C.r],
  [822, 266, 571, 525, C.g],
  [843, 273, 593, 533.500, C.dr],
  [903, 297, 654, 556.500, C.g],
  [767, 569, 800, 535, C.r],
  [757, 569, 800, 525, C.g],
  [797, 569, 830, 535, C.r],
  [833, 569, 866, 535, C.o],
  [654, 204, 625, 233, C.gr],
];
const SUPPORTS: [number, number][] = [
  [612, 258],
  [570, 301],
  [528, 344],
  [487, 388],
  [445, 431],
];
const LABELS: [number, number, number, string, string][] = [
  [520, 313, 31, "-31.01", "#a8343c"],
  [575, 318, 31, "-26.59", "#a8343c"],
  [631, 338, 26, "-8.92", "#a8343c"],
  [666, 351, 25, "-0.08", "#a8343c"],
  [712, 369, 22, "8.76", "#4c6076"],
];

/* Navigation cube: three faces, each split by two lines in both directions */
const CUBE: { p: number[][]; fill: string; centre?: string }[] = [
  { p: [[945, 127], [975, 97], [1023, 114], [993, 144]], fill: "#b3b3b5" },
  { p: [[945, 127], [993, 144], [993, 188], [945, 169]], fill: "#acacae", centre: "#f27a7a" },
  { p: [[993, 144], [1023, 114], [1023, 158], [993, 188]], fill: "#98989a" },
];
const at = (p: number[][], u: number, v: number) => {
  const x = (1 - v) * ((1 - u) * p[0][0] + u * p[1][0]) + v * ((1 - u) * p[3][0] + u * p[2][0]);
  const y = (1 - v) * ((1 - u) * p[0][1] + u * p[1][1]) + v * ((1 - u) * p[3][1] + u * p[2][1]);
  return `${x.toFixed(1)} ${y.toFixed(1)}`;
};

const ModelScene = () => (
  <Scene viewBox="212 87 827 482" preserveAspectRatio="xMinYMin slice" role="img" aria-label="Plaque continue, isolignes">
    <path d="M211 86H340L1040 345.500V462L943 570H688L211 391.500z" fill="#d5d6d8" />
    <path d="M340 86L1040 346M211 391.500L688 570" stroke="#77777a" strokeWidth="1" />
    {SEGMENTS.map(([a, b, c, d, s], i) => (
      <path key={i} d={`M${a} ${b}L${c} ${d}`} stroke={s} strokeWidth=".9" />
    ))}
    <path d="M211 107L234 117L211 142z" fill="#4db64d" />
    <path d="M870 569L880 556H950L943 569z" fill="#3fd83c" />
    <path d="M1034 402h6v60h-6z" fill="#3fd03c" />
    {SUPPORTS.map(([x, y]) => (
      <g key={x}>
        <path d={`M${x - 39} ${y + 29}L${x - 11} ${y - 1}L${x} ${y - 3}L${x + 11} ${y + 47}z`} fill="#3ccb3c" fillOpacity=".88" />
        <path d={`M${x} ${y}L${x + 39} ${y + 17}L${x + 11} ${y + 47}z`} fill="#38aa3a" fillOpacity=".85" />
        <circle cx={x} cy={y} r="14" fill="#22b822" fillOpacity=".8" />
        <path d={`M${x - 13} ${y + 5}L${x} ${y}L${x + 13} ${y + 5}A14 14 0 0 1 ${x - 13} ${y + 5}z`} fill="#17c017" fillOpacity=".7" />
      </g>
    ))}
    <path d="M430 432L598 254" stroke="#30c830" strokeWidth="4" strokeOpacity=".8" />
    <path d="M625 233L600 255L434 427L432 432L606 255z" fill="none" stroke="#14306e" strokeWidth=".8" />
    <path d="M664 207L414 467" stroke="#1c2ac0" strokeWidth=".9" />
    <path d="M678 212.500L430 472.500" stroke="#1a8ac0" strokeWidth=".6" />
    <path d="M612 258L652 273M550 306L600 324M500 357L556 378M456 412L504 430" stroke="#7c8c7e" strokeWidth=".9" />
    <path d="M554 306h4v4h-4zM568 311h4v4h-4zM623 332h4v4h-4zM658 345h4v4h-4zM704 362h4v4h-4z" fill="#8c8c8e" />
    <path
      d="M556 309L545 313H538zM570 313L576 320L590 318zM625 334L634 340L645 340zM660 347L668 353L680 353zM706 364L714 371L722 371z"
      fill="#f4f2ec"
      fillOpacity=".9"
    />
    {LABELS.map(([x, y, w, t, c]) => (
      <g key={t}>
        <rect x={x} y={y} width={w} height="14" fill="#f4f2ec" fillOpacity=".82" stroke="#c9c7c0" strokeWidth=".6" />
        <text x={x + w / 2} y={y + 10} textAnchor="middle" fontSize="9" fill={c}>
          {t}
        </text>
      </g>
    ))}
    <path d="M652 201h5v5h-5zM401 461h5v5h-5z" fill="#0d4fff" />

    <g strokeWidth="2">
      <path d="M260 507L246 520" stroke="#10c810" />
      <path d="M260 507V526" stroke="#101888" />
      <path d="M260 507L282 514" stroke="#e01010" />
    </g>
    <path d="M243 524L245 516L250 521z" fill="#10c810" />
    <path d="M257 524H263L260 532z" fill="#101888" />
    <path d="M280 511L288 517L279 517z" fill="#e01010" />
    <circle cx="260" cy="507" r="3" fill="#f2e010" />
    <text x="292" y="523" fontSize="9" fill="#f01818">X</text>
    <text x="237" y="532" fontSize="9" fill="#18d018">Y</text>
    <text x="257" y="542" fontSize="9" fill="#20208c">Z</text>

    <g stroke="#6e6e70" strokeLinejoin="round">
      {CUBE.map(({ p, fill, centre }, i) => (
        <g key={i}>
          <path d={`M${at(p, 0, 0)}L${at(p, 1, 0)}L${at(p, 1, 1)}L${at(p, 0, 1)}z`} fill={fill} strokeWidth="1.200" />
          {centre && (
            <path d={`M${at(p, 0.26, 0.26)}L${at(p, 0.74, 0.26)}L${at(p, 0.74, 0.74)}L${at(p, 0.26, 0.74)}z`} fill={centre} />
          )}
          {[0.26, 0.74].map((f) => (
            <path key={f} d={`M${at(p, f, 0)}L${at(p, f, 1)}M${at(p, 0, f)}L${at(p, 1, f)}`} strokeWidth="1.300" />
          ))}
        </g>
      ))}
    </g>
    <g fontWeight="700" fontSize="9">
      <text x="-6" y="3" transform="translate(985 122) rotate(14)" fill="#2a2c78">+Z</text>
      <text x="-5" y="3" transform="translate(970 158) rotate(8)" fill="#1c9a1c">-Y</text>
      <text x="-4" y="3" transform="translate(1008 151) rotate(-42)" fill="#c84848" fontSize="8">-X</text>
    </g>
  </Scene>
);

/* ---------- floating control panel ---------- */

const Control = styled.section`
  position: absolute;
  top: 106px;
  right: 3px;
  width: 234px;
  background: #fff;
  box-shadow: 0 2px 6px rgba(0, 0, 0, 0.45);
`;
const ControlTitle = styled.header`
  display: flex;
  align-items: center;
  justify-content: space-between;
  height: 25px;
  padding: 0 1px 0 5px;
  border-bottom: 1px solid #c8c8d2;
  color: #8a8894;
`;
const ControlClose = styled.button`
  width: 15px;
  height: 15px;
  background: #d8d8dc;
  color: #fff;
`;
const ControlHead = styled.p`
  margin: 0;
  height: 33px;
  padding: 3px 8px 0;
  line-height: 12px;
  color: #111;
  white-space: nowrap;
  sub { line-height: 0; }
`;
const LegendArea = styled.div`
  display: flex;
  margin: 0 1px;
  height: 260px;
  padding-top: 10px;
  background: #f7f7f7;
`;
const LegendList = styled.ul`
  list-style: none;
  margin: 0;
  padding: 5px 0 0;
  width: 163px;
`;
const LegendRow = styled.li`
  display: grid;
  grid-template-columns: 88px 34px 41px;
  align-items: center;
  height: 21px;
  padding-bottom: 1px;
  text-align: right;
`;
const LegendValue = styled.span`
  padding-right: 10px;
`;
const LegendColor = styled.span<{ $c: string }>`
  height: 20px;
  background: ${(p) => p.$c};
`;
const SliderBox = styled.div`
  display: grid;
  margin-left: 5px;
  width: 17px;
  height: 240px;
  background: linear-gradient(#e0e0e0, #e0e0e0) center / 4px 100% no-repeat;
`;
const Slider = styled.input`
  grid-area: 1 / 1;
  appearance: none;
  writing-mode: vertical-lr;
  direction: rtl;
  width: 17px;
  height: 240px;
  margin: 0;
  background: transparent;
  pointer-events: none;
  &::-webkit-slider-thumb {
    appearance: none;
    width: 17px;
    height: 8px;
    background: #0078d7;
    pointer-events: auto;
  }
`;
const ControlActions = styled.div`
  display: flex;
  justify-content: flex-end;
  align-items: center;
  gap: 5px;
  height: 27px;
  padding-right: 6px;
`;
const ActionButton = styled.button<{ $on?: boolean }>`
  width: 20px;
  height: 17px;
  display: flex;
  align-items: center;
  justify-content: center;
  background: #cde6fa;
  border: ${(p) => (p.$on ? "1px solid #3a7abf" : "0")};
`;
const ControlTabs = styled.div`
  display: flex;
  height: 20px;
  background: #f7f7f7;
`;

const LEGEND = [
  ["13.18", "#b90000", "14.38 %"],
  ["8.76", "#ff0000", "14.39 %"],
  ["4.34", "#ffaa00", "14.30 %"],
  ["-0.08", "#cfcf00", "8.54 %"],
  ["-4.50", "#ffff00", "7.18 %"],
  ["-8.92", "#00ff00", "7.18 %"],
  ["-13.34", "#00e68a", "7.18 %"],
  ["-17.75", "#00f5f5", "7.18 %"],
  ["-22.17", "#0099ff", "7.19 %"],
  ["-26.59", "#0000ff", "7.19 %"],
  ["-31.01", "#0000a5", "5.28 %"],
];

const ControlPanel = () => (
  <Control>
    <ControlTitle>
      Panneau de contrôle
      <ControlClose aria-label="Fermer">×</ControlClose>
    </ControlTitle>
    <ControlHead>
      Surfaces | Efforts internes | Efforts internes de base
      <br />m<sub>x</sub> [kNm/m]
    </ControlHead>
    <LegendArea>
      <LegendList>
        {LEGEND.map(([v, c, p]) => (
          <LegendRow key={v}>
            <LegendValue>{v}</LegendValue>
            <LegendColor $c={c} />
            <span>{p}</span>
          </LegendRow>
        ))}
      </LegendList>
      <SliderBox>
        <Slider type="range" aria-label="Valeur maximale" defaultValue={100} />
        <Slider type="range" aria-label="Valeur minimale" defaultValue={0} />
      </SliderBox>
    </LegendArea>
    <ControlActions>
      <ActionButton aria-label="Options du panneau"><Icon name="hand" size={14} /></ActionButton>
      <ActionButton $on aria-label="Échelles de couleurs"><Icon name="scales2" size={14} /></ActionButton>
    </ControlActions>
    <ControlTabs>
      <DockTab $on aria-label="Échelle"><Icon name="legend" size={13} /></DockTab>
      <DockTab aria-label="Facteurs"><Icon name="balance" size={14} /></DockTab>
      <DockTab aria-label="Filtre"><Icon name="factors" size={14} /></DockTab>
    </ControlTabs>
  </Control>
);

/* ---------- summary table ---------- */

const Summary = styled.section`
  flex: none;
  margin-top: 3px;
`;
const TableArea = styled.div`
  display: flex;
  height: 99px;
  border: solid #c4c4d2;
  border-width: 1px 0;
  overflow: hidden;
`;
const TableClip = styled.div`
  flex: 1;
  min-width: 0;
  overflow: hidden;
`;
const Table = styled.table`
  width: 100%;
  table-layout: fixed;
  border-collapse: collapse;
  th, td {
    font-weight: 500;
    padding: 0 3px;
    border: solid #dedee2;
    border-width: 0 1px 1px 0;
    white-space: nowrap;
    line-height: 12px;
  }
`;
const RowHeadCol = styled.col`
  width: 49px;
`;
const TextCol = styled.col`
  width: 285px;
`;
const NumberCol = styled.col`
  width: 65px;
`;
const StripRow = styled.tr`
  height: 8px;
  background: #e0e0e0;
  th { border-bottom: 0; height: 8px; padding: 0; line-height: 0; }
`;
const HeadRow = styled.tr`
  background: #f0f0f0;
  th { height: 26px; vertical-align: bottom; text-align: center; border-color: #d0d0d4; }
`;
const SectionRow = styled.tr`
  height: 13px;
  background: #ebebeb;
`;
const DataRow = styled.tr<{ $alt: boolean }>`
  height: 13px;
  background: ${(p) => (p.$alt ? "#fef8e6" : "#fffcf3")};
  td:first-child { background: #e0e0e0; border-bottom-color: #e0e0e0; }
  td:nth-child(3) { text-align: right; }
`;
const Pager = styled.div`
  display: flex;
  align-items: stretch;
  height: 17px;
  padding-left: 1px;
`;
const PagerInfo = styled.span`
  padding: 0 14px 0 11px;
  align-self: center;
`;
const PageTab = styled.button`
  width: 51px;
  background: #fff;
  border: solid #d0d0d8;
  border-width: 0 1px;
`;

const SummaryPanel = () => (
  <Summary>
    <DockTitle>
      Résumé
      <Spacer />
      <WindowButton $w={18} aria-label="Détacher"><FloatGlyph /></WindowButton>
      <WindowButton $w={16} aria-label="Fermer"><CloseGlyph /></WindowButton>
    </DockTitle>
    <MenuBar>
      <MenuItems $pad={7}>
        {["Accéder à", "Modifier", "Sélection", "Affichage", "Paramètres"].map((m) => (
          <MenuItem key={m}>{m}</MenuItem>
        ))}
      </MenuItems>
    </MenuBar>
    <Bar $h={21} $pad={2}>
      <ComboBox $w={102}>
        <Icon name="static" size={12} />
        <Select aria-label="Analyse"><option>Analyse statique</option></Select>
        <ChevronDown />
      </ComboBox>
      <Step aria-label="Précédent"><TriLeft /></Step>
      <Step aria-label="Suivant"><TriRight /></Step>
      <Sep $w={8} />
      <ComboBox $w={174}>
        <Icon name="static" size={12} />
        <Select aria-label="Table"><option>Aperçu</option></Select>
        <ChevronDown />
      </ComboBox>
      <Step $on aria-label="Précédent"><TriLeft c="#777" /></Step>
      <Step aria-label="Suivant"><TriRight /></Step>
      <Sep $w={7} />
      <LoadCombo w={175} />
      <Step $on aria-label="Précédent"><TriLeft c="#555" /></Step>
      <Step $on aria-label="Suivant"><TriRight c="#555" /></Step>
      <Tools items="|6 *jumpOut *jumpIn |6 *resultEye *resultX |5 tableGray tableUp tableUp |6 chart |5 sheet |5 excel |5 filterWin >>" />
    </Bar>
    <TableArea>
      <TableClip>
        <Table>
          <colgroup>
            <RowHeadCol />
            <TextCol />
            <NumberCol />
            <NumberCol />
            <col />
          </colgroup>
          <thead>
            <StripRow aria-hidden="true"><th /><th /><th /><th /><th /></StripRow>
            <HeadRow>
              <th aria-label="Ligne" />
              <th scope="col">Description</th>
              <th scope="col">Valeur</th>
              <th scope="col">Unité</th>
              <th scope="col">Remarques</th>
            </HeadRow>
          </thead>
          <tbody>
            <SectionRow>
              <td colSpan={5}>Somme des charges et somme des forces d'appui</td>
            </SectionRow>
            {[
              "Somme des charges en X",
              "Somme des forces d'appui en X",
              "Somme des charges en Y",
              "Somme des forces d'appui en Y",
            ].map((t, i) => (
              <DataRow key={t} $alt={i % 2 === 1}>
                <td />
                <td>{t}</td>
                <td>0.00</td>
                <td>kN</td>
                <td />
              </DataRow>
            ))}
          </tbody>
        </Table>
      </TableClip>
      <ScrollBar>
        <ScrollButton aria-label="Monter"><UpGlyph /></ScrollButton>
        <Thumb $h={14} />
        <Spacer />
        <ScrollButton aria-label="Descendre"><DownGlyph /></ScrollButton>
      </ScrollBar>
    </TableArea>
    <Pager>
      <Step aria-label="Première page"><Glyph w={7} d="M1.500 1v6M6.500 1.500L3.500 4l3 2.500z" fill="#999" stroke="#999" /></Step>
      <Step aria-label="Page précédente"><TriLeft c="#aaa" /></Step>
      <PagerInfo>1 sur 1</PagerInfo>
      <Step aria-label="Page suivante"><TriRight c="#aaa" /></Step>
      <Step aria-label="Dernière page"><Glyph w={7} d="M6.500 1v6M1.500 1.500L4.500 4l-3 2.500z" fill="#999" stroke="#999" /></Step>
      <PageTab>Résumé</PageTab>
    </Pager>
  </Summary>
);

/* ---------- footer ---------- */

const StatusBar = styled.footer`
  display: flex;
  align-items: center;
  height: 14px;
  flex: none;
  background: #e6e7f1;
`;
const StatusCell = styled.span<{ $w?: number }>`
  ${(p) => (p.$w ? `width: ${p.$w}px; flex: none;` : "flex: 1;")}
  height: 12px;
  line-height: 12px;
  padding-left: 3px;
  border-right: 1px solid #cfd0dc;
  white-space: nowrap;
`;
const Pointer = styled.svg`
  position: absolute;
  left: 174px;
  top: 660px;
  width: 63px;
  height: 26px;
  filter: drop-shadow(1px 2px 1px rgba(0, 0, 0, 0.15));
`;

export default function App() {
  return (
    <>
      <GlobalStyle />
      <Shell>
        <TitleBar>
          <Svg $s={12} viewBox="0 0 16 16" aria-hidden="true">
            <path d="M11 1Q2 5 3 11a5 5 0 1 0 5-4Q5 7 5 10" fill="none" stroke="#f2c21a" strokeWidth="2.600" />
            <path d="M7 2l5 1l2 3M2 3l3-1" stroke="#222" strokeWidth="1.600" fill="none" />
          </Svg>
          <TitleText>Dlubal RFEM | 6.04.0012 | Plaque continue.rf6*</TitleText>
          <Spacer />
          <WindowButton aria-label="Réduire"><Glyph w={9} d="M0 4h8" stroke="#fff" /></WindowButton>
          <WindowButton aria-label="Agrandir"><Glyph w={9} d="M.6.600h6.800v6.800H.6z" stroke="#fff" /></WindowButton>
          <WindowButton aria-label="Fermer"><Glyph w={9} d="M.5.500l7 7M7.500.500l-7 7" stroke="#fff" /></WindowButton>
        </TitleBar>

        <MenuBar>
          <Svg $s={13} viewBox="0 0 16 16" aria-hidden="true">
            <path d="M0 2h16v12H0z" fill="#1c2c62" />
            <path d="M0 6h16M8 2v12M0 8Q5 13 8 7T16 8" stroke="#b9c6e8" fill="none" />
          </Svg>
          <MenuItems $pad={6}>
            {["Fichier", "Modifier", "Affichage", "Insérer", "Assigner", "Calculer", "Résultats", "Outils", "Options", "Fenêtre", "CAO-BIM", "Aide"].map((m) => (
              <MenuItem key={m}>{m}</MenuItem>
            ))}
          </MenuItems>
          <SearchGroup>
            <Step aria-label="Développer la recherche"><TriRight c="#888" /></Step>
            <Search placeholder="Entrez un mot-clé (Alt+Q)" aria-label="Entrez un mot-clé" />
            <WindowButton $w={22} aria-label="Lancer la recherche">
              <Svg $s={13} viewBox="0 0 16 16"><path d="M0 4h6M0 8h7M0 12h15" stroke="#888" /><circle cx="11" cy="5" r="3.500" fill="none" stroke="#888" /><path d="M13 8l3 3" stroke="#888" /></Svg>
            </WindowButton>
          </SearchGroup>
          <Spacer />
          <MenuItem>Dlubal Software SARL</MenuItem>
          <WindowButton $w={26} aria-label="Réduire le document"><Glyph d="M1 6h6" stroke="#222" /></WindowButton>
          <WindowButton $w={11} aria-label="Restaurer le document"><FloatGlyph /></WindowButton>
          <WindowButton $w={14} aria-label="Fermer le document"><CloseGlyph /></WindowButton>
        </MenuBar>

        <Bar $h={22}>
          <Tools items=":7 newModel open brand brandGear box save print v docStar doc |5 undo v redo v |7 *navPanel *tablePanel *ctrlPanel console script listDoc :9 lasso v zone :9 loadNew load" />
          <LoadCombo w={187} />
          <Step $on aria-label="Précédent"><TriLeft c="#555" /></Step>
          <Step aria-label="Suivant"><TriRight /></Step>
          <Tools items="filterOff v coilEye coilX loadEye loadX solidEye *meshEye *v *resultEye *resultX |7 resultWin abacus v :7 findOff" />
          <More>»</More>
        </Bar>
        <Bar $h={23} $pb={1}>
          <Tools items=":7 node v line member v poly v |5 nodeSup lineSup surfSup |7 surf v surfCurved v opening v solid v solidGray |5 loadGray v |5 nodalLoad lineLoad memberLoad surfLoad impLoad v nodeImp v :9 filterWin |7 frameGlobal film |5 bars *surface cubeGray reactions section |7 dimA dimB dimC dimD dimE sectionNew pin |7 iso v :9 gridWin gridDots *planeA planeB planeB >>" />
        </Bar>

        <Main>
          <Dock>
            <DockTitle>
              Navigateur - Résultats
              <Spacer />
              <WindowButton $w={17} aria-label="Détacher"><FloatGlyph /></WindowButton>
              <WindowButton $w={16} aria-label="Fermer"><CloseGlyph /></WindowButton>
            </DockTitle>
            <Bar $h={29} $pad={2} $pb={6}>
              <ComboBox $w={176} $light>
                <Icon name="staticGray" size={12} />
                <Select $muted aria-label="Analyse"><option>Analyse statique</option></Select>
                <ChevronDown />
              </ComboBox>
              <Step $on aria-label="Précédent"><TriLeft c="#555" /></Step>
              <Step $on aria-label="Suivant"><TriRight c="#555" /></Step>
            </Bar>
            <TreePanel>
              <TreeView rows={RESULTS} h={366} group="component" pb={15} />
            </TreePanel>
            <DockGap />
            <TreePanel $grow>
              <TreeView rows={DISPLAY} h={220} group="display" />
              <ScrollBar>
                <ScrollButton aria-label="Monter"><UpGlyph /></ScrollButton>
                <Thumb />
                <ScrollButton aria-label="Descendre"><DownGlyph /></ScrollButton>
              </ScrollBar>
            </TreePanel>
            <DockTabs>
              <DockTab aria-label="Données"><Icon name="dataTab" size={14} /></DockTab>
              <DockTab aria-label="Affichage"><Icon name="eye" size={14} /></DockTab>
              <DockTab aria-label="Vues"><Icon name="camera" size={13} /></DockTab>
              <DockTab $on aria-label="Résultats"><Icon name="wedge" size={13} /></DockTab>
            </DockTabs>
          </Dock>

          <Work>
            <Viewport>
              <ModelScene />
              <ViewText>
                CC1 - Poids propre
                <br />
                Analyse statique
                <br />
                Moments m<sub>x</sub> [kNm/m]
              </ViewText>
              <ViewFooter>
                max m<sub>x</sub> : 17.60 | min m<sub>x</sub> : -35.43 kNm/m
              </ViewFooter>
              <ControlPanel />
            </Viewport>
            <SummaryPanel />
          </Work>
        </Main>

        <Bar $h={21} $pad={1}>
          <Tools items="axes" w={19} />
          <ComboBox $w={101}>
            <OneSwatch />
            <Select aria-label="Système de coordonnées"><option>1 - Global XYZ</option></Select>
            <ChevronDown />
          </ComboBox>
          <Tools
            w={20}
            items="|6 viewStar viewX viewY viewZ viewRot |5 objStar dimStar v dimStarX person clockStar |5 chain v renum v |5 lines3 linesV strip v lineDiag arcLine >>"
          />
          <Tools w={25} items="corner gridEye gridStar" />
          <Tools w={20} items="*gridEyeBlue" />
          <Tools w={25} items="guideStar" />
          <Tools w={20} items="*guideEye" />
          <SnapGroup>
            <Tools
              w={19}
              items="*snap *magnet *sqr *circX sqrX perp ray para tang hex xA xB xC pts *gridB guides *stack *beam"
            />
          </SnapGroup>
        </Bar>
        <StatusBar>
          <StatusCell />
          <StatusCell $w={86} />
          <StatusCell $w={168}>SC : Global XYZ</StatusCell>
          <StatusCell $w={53}>Plan : XY</StatusCell>
          <StatusCell $w={62} />
          <StatusCell $w={62} />
          <StatusCell $w={62} />
          <Svg $s={13} viewBox="0 0 16 16" aria-hidden="true">
            <path d="M12 6h2M9 9h5M6 12h8" stroke="#aaa" strokeWidth="2" strokeDasharray="2 1" />
          </Svg>
        </StatusBar>

        <Pointer viewBox="0 0 63 26" aria-hidden="true">
          <path d="M1 12.500L25 1V9H58a4 4 0 0 1 0 8H25V24z" fill="#fb4045" />
        </Pointer>
      </Shell>
    </>
  );
}
